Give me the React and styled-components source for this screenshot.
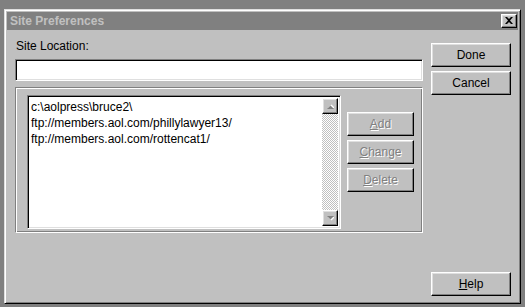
import React from "react";
import styled, { createGlobalStyle, css } from "styled-components";

const Global = createGlobalStyle`
  html, body { margin: 0; padding: 0; background: #808080; }
  body { font-family: "Liberation Sans", Arial, sans-serif; font-size: 12px; color: #000; }
  * { box-sizing: border-box; }
`;

const raised = css`
  border: 1px solid;
  border-color: #fff #000 #000 #fff;
  box-shadow: inset -1px -1px 0 #808080, inset 1px 1px 0 #dfdfdf;
`;

const sunken = css`
  border: 1px solid;
  border-color: #808080 #fff #fff #808080;
  box-shadow: inset 1px 1px 0 #000, inset -1px -1px 0 #dfdfdf;
`;

const Window = styled.div`
  margin: 9px 0 0 4px;
  width: 517px;
  height: 295px;
  background: #c0c0c0;
  border: 1px solid;
  border-color: #dfdfdf #000 #000 #dfdfdf;
  box-shadow: inset 1px 1px 0 #fff, inset -1px -1px 0 #808080;
  padding: 2px;
  display: flex;
  flex-direction: column;
`;

const TitleBar = styled.div`
  height: 18px;
  background: #808080;
  display: flex;
  align-items: center;
  padding: 0 1px 0 3px;
`;

const Title = styled.span`
  flex: 1;
  color: #c0c0c0;
  font-weight: bold;
  font-size: 12px;
`;

const CloseBtn = styled.div`
  width: 16px;
  height: 14px;
  background: #c0c0c0;
  ${raised};
  display: flex;
  align-items: center;
  justify-content: center;
  padding-bottom: 1px;
`;

const Body = styled.div`
  flex: 1;
  display: flex;
  gap: 8px;
  padding: 9px 7px 5px 8px;
`;

const LeftCol = styled.div`
  width: 408px;
  display: flex;
  flex-direction: column;
`;

const Label = styled.div`
  height: 14px;
  line-height: 14px;
  padding-left: 1px;
`;

const Input = styled.div`
  margin-top: 6px;
  height: 22px;
  background: #fff;
  ${sunken};
`;

const Group = styled.div`
  margin-top: 6px;
  height: 146px;
  border: 1px solid;
  border-color: #808080 #fff #fff #808080;
  box-shadow: inset 1px 1px 0 #fff, inset -1px -1px 0 #808080;
  padding: 7px 8px 0 11px;
  display: flex;
  gap: 6px;
`;

const ListBox = styled.div`
  width: 314px;
  height: 134px;
  background: #fff;
  ${sunken};
  padding: 2px;
  display: flex;
`;

const Items = styled.div`
  flex: 1;
  padding: 1px 1px;
  line-height: 16px;
`;

const Item = styled.div`
  white-space: nowrap;
`;

const ScrollBar = styled.div`
  width: 16px;
  display: flex;
  flex-direction: column;
`;

const ArrowBtn = styled.div`
  width: 16px;
  height: 16px;
  background: #c0c0c0;
  ${raised};
  display: flex;
  align-items: center;
  justify-content: center;
`;

const Track = styled.div`
  flex: 1;
  background: repeating-conic-gradient(#fff 0 25%, #c0c0c0 0 50%) 0 0 / 2px 2px;
`;

const SideButtons = styled.div`
  display: flex;
  flex-direction: column;
  gap: 4px;
  padding-top: 17px;
`;

const Button = styled.div`
  width: ${(p) => p.$w || 80}px;
  height: 24px;
  background: #c0c0c0;
  ${raised};
  display: flex;
  align-items: center;
  justify-content: center;
  font-size: 12px;
  color: ${(p) => (p.$disabled ? "#808080" : "#000")};
  text-shadow: ${(p) => (p.$disabled ? "1px 1px 0 #fff" : "none")};
  u { text-decoration: underline; }
`;

const RightCol = styled.div`
  width: 80px;
  display: flex;
  flex-direction: column;
  gap: 4px;
  padding-top: 4px;
`;

const Spacer = styled.div`
  flex: 1;
`;

const Arrow = ({ down }) => (
  <svg width="7" height="5" viewBox="0 0 7 5">
    <g transform={down ? "" : "translate(0 5) scale(1 -1)"}>
      <polygon points="1,1 8,1 4.5,4.5" fill="#fff" />
      <polygon points="0,0 7,0 3.5,3.5" fill="#808080" />
    </g>
  </svg>
);

export default function App() {
  return (
    <>
      <Global />
      <Window>
        <TitleBar>
          <Title>Site Preferences</Title>
          <CloseBtn>
            <svg width="8" height="7" viewBox="0 0 8 7">
              <path d="M0 0h2l2 2 2-2h2L5 3.5 8 7H6L4 5 2 7H0l3-3.5z" fill="#000" />
            </svg>
          </CloseBtn>
        </TitleBar>
        <Body>
          <LeftCol>
            <Label>Site Location:</Label>
            <Input />
            <Group>
              <ListBox>
                <Items>
                  <Item>c:\aolpress\bruce2\</Item>
                  <Item>ftp://members.aol.com/phillylawyer13/</Item>
                  <Item>ftp://members.aol.com/rottencat1/</Item>
                </Items>
                <ScrollBar>
                  <ArrowBtn><Arrow /></ArrowBtn>
                  <Track />
                  <ArrowBtn><Arrow down /></ArrowBtn>
                </ScrollBar>
              </ListBox>
              <SideButtons>
                <Button $w={67} $disabled><span><u>A</u>dd</span></Button>
                <Button $w={67} $disabled><span><u>C</u>hange</span></Button>
                <Button $w={67} $disabled><span><u>D</u>elete</span></Button>
              </SideButtons>
            </Group>
          </LeftCol>
          <RightCol>
            <Button>Done</Button>
            <Button>Cancel</Button>
            <Spacer />
            <Button><span><u>H</u>elp</span></Button>
          </RightCol>
        </Body>
      </Window>
    </>
  );
}
